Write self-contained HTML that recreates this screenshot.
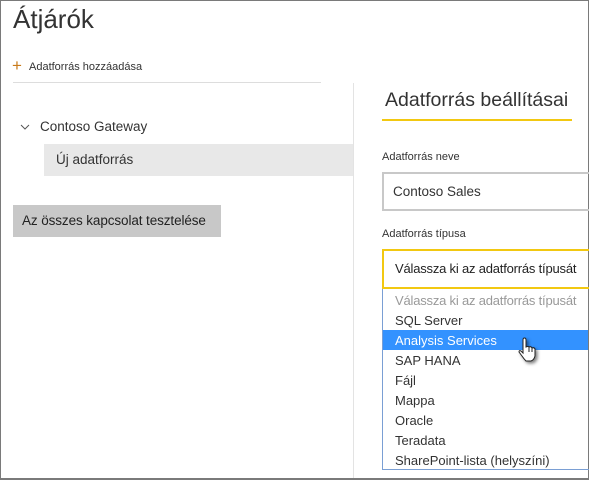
<!DOCTYPE html><html><head><style>
body{margin:0;width:589px;height:480px;overflow:hidden;font-family:"Liberation Sans",sans-serif;background:#fff;position:relative}
.a{position:absolute;white-space:nowrap}
</style></head><body>
<div class="a" style="left:0;top:0;width:587px;height:477px;border:1px solid #7a7a7a;border-bottom-width:2px;border-right-width:2px;box-sizing:content-box"></div>
<div class="a" style="left:13px;top:4px;font-size:26px;color:#333">Átjárók</div>
<div class="a" style="left:12px;top:57px;font-size:17px;color:#c87a1a;line-height:17px">+</div>
<div class="a" style="left:29px;top:61px;font-size:11px;color:#333">Adatforrás hozzáadása</div>
<div class="a" style="left:13px;top:82px;width:308px;height:1px;background:#ddd"></div>
<div class="a" style="left:353px;top:83px;width:1px;height:395px;background:#e3e3e3"></div>
<svg class="a" style="left:20px;top:123px" width="10" height="8"><path d="M1 2 L5 6 L9 2" fill="none" stroke="#555" stroke-width="1"/></svg>
<div class="a" style="left:40px;top:119px;font-size:13.5px;color:#333">Contoso Gateway</div>
<div class="a" style="left:44px;top:144px;width:309px;height:32px;background:#e8e8e8"></div>
<div class="a" style="left:56px;top:152px;font-size:13.5px;color:#333">Új adatforrás</div>
<div class="a" style="left:13px;top:205px;width:208px;height:32px;background:#c8c8c8"></div>
<div class="a" style="left:22px;top:213px;font-size:13.5px;color:#222;letter-spacing:-0.1px">Az összes kapcsolat tesztelése</div>
<div class="a" style="left:385px;top:89px;font-size:19.5px;color:#333">Adatforrás beállításai</div>
<div class="a" style="left:382px;top:119px;width:190px;height:2px;background:#f2c811"></div>
<div class="a" style="left:382px;top:151px;font-size:11px;color:#333">Adatforrás neve</div>
<div class="a" style="left:382px;top:172px;width:210px;height:39px;border:2px solid #c8c8c8;box-sizing:border-box"></div>
<div class="a" style="left:393px;top:184px;font-size:13.5px;color:#333">Contoso Sales</div>
<div class="a" style="left:382px;top:228px;font-size:11px;color:#333">Adatforrás típusa</div>
<div class="a" style="left:382px;top:249px;width:210px;height:40px;border:2px solid #f2c811;box-sizing:border-box"></div>
<div class="a" style="left:395px;top:261px;font-size:13px;color:#222;letter-spacing:-0.2px">Válassza ki az adatforrás típusát</div>
<div class="a" style="left:382px;top:289px;width:210px;height:181px;border:1px solid #7a9fd4;border-top:none;box-sizing:border-box"></div>
<div class="a" style="left:383px;top:330px;width:205px;height:20px;background:#3392ff"></div>
<div class="a" style="left:395px;top:291px;font-size:13px;line-height:20px;color:#333">
<div style="color:#999;letter-spacing:-0.2px">Válassza ki az adatforrás típusát</div>
<div>SQL Server</div>
<div style="color:#fff">Analysis Services</div>
<div>SAP HANA</div>
<div>Fájl</div>
<div>Mappa</div>
<div>Oracle</div>
<div>Teradata</div>
<div>SharePoint-lista (helyszíni)</div>
</div>
<svg class="a" style="left:517px;top:337px" width="24" height="30"><path d="M6 3 Q6 1 7.5 1 Q9 1 9 3 L9 10 Q11 9 12 10 Q14 9 15 11 Q17 10 18 12 L18 19 Q17 23 14 24 L9 24 Q7 22 5 19 L2 15 Q2 13 4 14 L6 16 Z" fill="#fff" stroke="#222" stroke-width="1" filter="drop-shadow(2px 2px 1.5px rgba(0,0,0,.5))"/><path d="M12 10 V15 M15 11 V15" stroke="#222" stroke-width="1"/></svg>
</body></html>
